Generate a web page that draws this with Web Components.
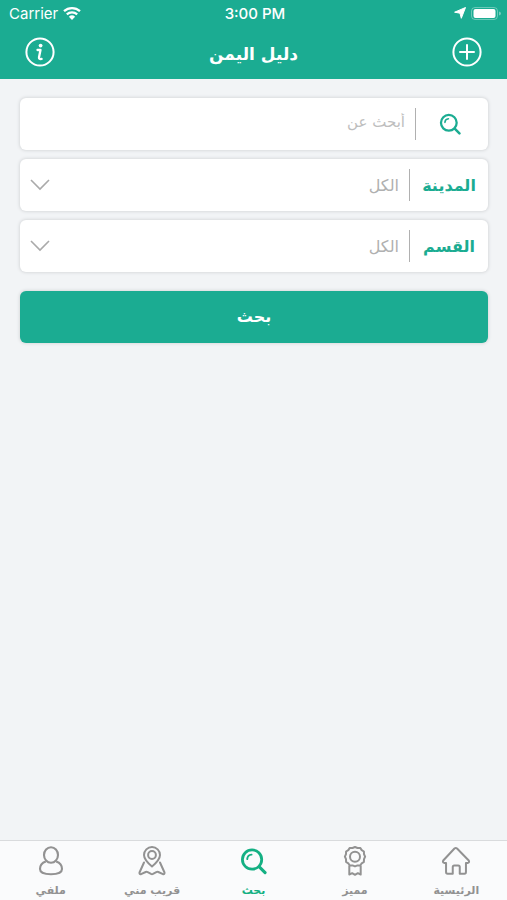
<!DOCTYPE html>
<html lang="ar" dir="rtl">
<head>
<meta charset="utf-8">
<meta name="viewport" content="width=device-width, initial-scale=1">
<title>دليل اليمن</title>
<style>
  :root {
    --brand: #1bac92;
    --accent: #14b083;
    --muted: #b0b0b0;
    --tab: #929292;
  }
  body {
    margin: 0;
    background: #f2f4f6;
    font-family: "DejaVu Sans", sans-serif;
  }
</style>
</head>
<body>
<guide-app></guide-app>
<script>
const ICONS = {
  wifi: '<path d="M1 5.2a12 12 0 0 1 16 0M3.8 8.3a8 8 0 0 1 10.4 0" fill="none" stroke="currentColor" stroke-width="2.3"/><path d="M5.900 10.700a4.700 4.700 0 0 1 6.200 0L9 14z" fill="currentColor"/>',
  location: '<path d="M11.5.5 7.300 11.300 6 6.200.6 5.200z" fill="currentColor" stroke="currentColor" stroke-linejoin="round"/>',
  battery: '<rect x=".5" y=".5" width="26" height="12" rx="3.5" fill="none" stroke="currentColor" stroke-opacity=".35"/><rect x="2.500" y="2" width="22" height="9" rx="2" fill="currentColor"/><path d="M28 4.500v4q2-.6 2-2t-2-2z" fill="currentColor" opacity=".4"/>',
  info: '<g fill="none" stroke="currentColor" stroke-width="2" stroke-linecap="round" stroke-linejoin="round"><circle cx="15" cy="15" r="13.600"/><path d="M12.500 13h3l-1.500 7.300q-.3 2.200 2.600 1.600" stroke-width="2.300"/></g><circle cx="15.600" cy="8.600" r="1.900" fill="currentColor"/>',
  plus: '<g fill="none" stroke="currentColor" stroke-width="2" stroke-linecap="round"><circle cx="15" cy="15" r="13.600"/><path d="M15 8v14M8 15h14"/></g>',
  search: '<g fill="none" stroke="currentColor" stroke-linecap="round"><circle cx="12.500" cy="12.500" r="10" stroke-width="2.900"/><path d="m20 20 6 6" stroke-width="3.200"/><path d="M7.500 12a5 5 0 0 1 4.500-4.600" stroke-width="2"/></g>',
  chevron: '<path d="m1 1 9 9 9-9" fill="none" stroke="currentColor" stroke-width="1.600"/>',
  home: '<path d="M2 14.500 13.200 2.500q1.300-1 2.600 0L27.500 14.500q1 1.700-.8 2.400h-2V26q0 1.700-1.500 1.700h-4.700V21q0-1.500-1.500-1.500h-4q-1.500 0-1.500 1.500v6.700H6.300Q4.800 27.700 4.800 26v-9.100H2.900Q1 16.200 2 14.500z" fill="none" stroke="currentColor" stroke-width="2" stroke-linejoin="round"/>',
  award: '<g fill="none" stroke="currentColor" stroke-width="2" stroke-linejoin="round"><path d="M14.500 1 17 2l2.700-.1 1.500 2.200 2.200 1.400.1 2.700 1.100 2.500-1.100 2.500-.1 2.700-2.200 1.400-1.500 2.200-2.700-.1-2.500 1-2.500-1-2.700.1-1.500-2.200-2.200-1.400-.1-2.700-1.100-2.500 1.100-2.500.1-2.700 2.200-1.400 1.500-2.200 2.700.1z"/><circle cx="14.500" cy="10.700" r="5"/><path d="M8.800 19.500v9l2.900-1.300 2.800 1.600 2.800-1.600 2.900 1.300v-9"/></g>',
  map: '<g fill="none" stroke="currentColor" stroke-width="2" stroke-linejoin="round" stroke-linecap="round"><path d="M14.500 20.500Q6.500 13.700 6.500 9a8 8 0 0 1 16 0q0 4.700-8 11.500z"/><circle cx="14.500" cy="9" r="3.900"/><path d="M6.500 16.500 2 26.500q-.3 2 1.500 1.700l4.700-2.200q1-.4 2 .1l3.300 1.800q1 .5 2 0l3.300-1.800q1-.5 2-.1l4.700 2.200q1.800.3 1.500-1.700l-4.500-10"/></g>',
  user: '<g fill="none" stroke="currentColor" stroke-width="2.100"><ellipse cx="14.500" cy="9" rx="7" ry="7.800"/><path d="M9.300 15.500Q3.500 17.500 3.500 23q0 5.200 11 5.200t11-5.200q0-5.500-5.800-7.500"/></g>'
};
const VIEW = {
  wifi: '0 0 18 15', location: '0 0 12 12', battery: '0 0 30 13', chevron: '0 0 20 12',
  search: '0 0 28 28', info: '0 0 30 30', plus: '0 0 30 30',
  home: '0 0 29.500 30', award: '0 0 29 30', map: '0 0 29 30', user: '0 0 29 30'
};

class AppIcon extends HTMLElement {
  connectedCallback() {
    if (this.shadowRoot) return;
    const name = this.getAttribute('name');
    this.attachShadow({ mode: 'open' }).innerHTML = `
      <style>:host{display:block;flex:none;width:30px;height:30px} svg{display:block;width:100%;height:100%}</style>
      <svg viewBox="${VIEW[name]}" aria-hidden="true">${ICONS[name]}</svg>`;
  }
}

class StatusBar extends HTMLElement {
  connectedCallback() {
    this.attachShadow({ mode: 'open' }).innerHTML = `
      <style>
        :host{display:grid;grid-template-columns:1fr auto 1fr;align-items:center;direction:ltr;height:28px;padding:0 6px 0 9px;
          font:15px/20px Inter,sans-serif;color:#fff}
        div{display:flex;align-items:center;gap:5px}
        .right{justify-content:flex-end;padding-bottom:2px}
        .time{font-size:15px;font-weight:500}
        .wifi{width:18px;height:15px;margin-bottom:2px}.loc{width:12px;height:12px}.bat{width:30px;height:13px}
      </style>
      <div><span>Carrier</span><app-icon class="wifi" name="wifi"></app-icon></div>
      <span class="time">3:00 PM</span>
      <div class="right"><app-icon class="loc" name="location"></app-icon><app-icon class="bat" name="battery"></app-icon></div>`;
  }
}

class NavHeader extends HTMLElement {
  connectedCallback() {
    this.attachShadow({ mode: 'open' }).innerHTML = `
      <style>
        :host{display:flex;align-items:center;justify-content:space-between;height:51px;padding:0 25px;color:#fff}
        button{display:block;padding:0;border:0;background:none;color:inherit;margin-bottom:4px}
        h1{margin:0;font-size:17px;line-height:28px;font-weight:700}
      </style>
      <button type="button" aria-label="إضافة"><app-icon name="plus"></app-icon></button>
      <h1><slot></slot></h1>
      <button type="button" aria-label="معلومات"><app-icon name="info"></app-icon></button>`;
  }
}

const CARD = `
  :host{display:flex;align-items:center;height:52px;border-radius:6px;background:#fff;box-shadow:0 0 3px 1px #d9dbdd}
  label{display:flex;align-items:center;justify-content:center;flex:none;color:var(--brand)}
  .rule{flex:none;width:1px;height:32px;background:#b0b0b0}
  input,select{flex:1;min-width:0;height:100%;box-sizing:border-box;margin:0;padding:0 10px;border:0;outline:0;
    background:none;font:16px/24px "DejaVu Sans",sans-serif;color:var(--muted);appearance:none}`;

class SearchField extends HTMLElement {
  connectedCallback() {
    this.attachShadow({ mode: 'open' }).innerHTML = `
      <style>${CARD}
        label{width:72px}
        app-icon{width:22px;height:22px;margin-inline-end:-2px}
        label{box-sizing:border-box;padding-inline-start:2px}
        input{padding-bottom:4px;font-size:15px}
        input::placeholder{color:#bebebe;opacity:1}
      </style>
      <label for="q" aria-label="بحث"><app-icon name="search"></app-icon></label>
      <span class="rule"></span>
      <input id="q" type="text" placeholder="${this.getAttribute('placeholder')}">`;
  }
}

class SelectField extends HTMLElement {
  connectedCallback() {
    this.attachShadow({ mode: 'open' }).innerHTML = `
      <style>${CARD}
        label{width:78px;font-size:16px;line-height:24px;font-weight:700}
        label,select{padding-top:2px}
        app-icon{width:20px;height:12px;margin-inline-end:10px;color:#aaa;pointer-events:none}
      </style>
      <label for="s">${this.getAttribute('label')}</label>
      <span class="rule"></span>
      <select id="s"><option>${this.getAttribute('value')}</option></select>
      <app-icon name="chevron"></app-icon>`;
  }
}

class SubmitButton extends HTMLElement {
  connectedCallback() {
    this.attachShadow({ mode: 'open' }).innerHTML = `
      <style>
        :host{display:block}
        button{display:block;width:100%;height:52px;padding:0;border:0;border-radius:6px;background:var(--brand);
          color:#fff;font:700 16px/24px "DejaVu Sans",sans-serif;box-shadow:0 0 3px 1px #dadcde}
      </style>
      <button type="button"><slot></slot></button>`;
  }
}

class TabItem extends HTMLElement {
  connectedCallback() {
    this.attachShadow({ mode: 'open' }).innerHTML = `
      <style>
        :host{display:block;flex:1 1 0;min-width:0;color:var(--tab)}
        :host([active]){color:var(--accent)}
        a{display:flex;flex-direction:column;align-items:center;gap:6px;padding-top:5px;color:inherit;text-decoration:none;
          font-size:11px;line-height:18px;font-weight:700;white-space:nowrap}
        :host([active]) app-icon{width:27px;height:30px}
      </style>
      <a href="#"><app-icon name="${this.getAttribute('icon')}"></app-icon><span><slot></slot></span></a>`;
  }
}

class TabBar extends HTMLElement {
  connectedCallback() {
    this.attachShadow({ mode: 'open' }).innerHTML = `
      <style>
        :host{display:block;position:sticky;bottom:0;background:#fafbfc;border-top:1px solid #d9dbdd}
        nav{display:flex;height:59px}
      </style>
      <nav><slot></slot></nav>`;
  }
}

class GuideApp extends HTMLElement {
  connectedCallback() {
    this.attachShadow({ mode: 'open' }).innerHTML = `
      <style>
        :host{display:flex;flex-direction:column;min-height:100vh}
        header{background:var(--brand)}
        main{flex:1;padding:19px 19px 19px 20px}
        form{display:flex;flex-direction:column;gap:9px}
        submit-button{margin-top:10px}
      </style>
      <header><status-bar></status-bar><nav-header>دليل اليمن</nav-header></header>
      <main><form>
        <search-field placeholder="أبحث عن"></search-field>
        <select-field label="المدينة" value="الكل"></select-field>
        <select-field label="القسم" value="الكل"></select-field>
        <submit-button>بحث</submit-button>
      </form></main>
      <tab-bar>
        <tab-item icon="home">الرئيسية</tab-item>
        <tab-item icon="award">مميز</tab-item>
        <tab-item icon="search" active>بحث</tab-item>
        <tab-item icon="map">قريب مني</tab-item>
        <tab-item icon="user">ملفي</tab-item>
      </tab-bar>`;
  }
}

customElements.define('app-icon', AppIcon);
customElements.define('status-bar', StatusBar);
customElements.define('nav-header', NavHeader);
customElements.define('search-field', SearchField);
customElements.define('select-field', SelectField);
customElements.define('submit-button', SubmitButton);
customElements.define('tab-item', TabItem);
customElements.define('tab-bar', TabBar);
customElements.define('guide-app', GuideApp);
</script>
</body>
</html>
